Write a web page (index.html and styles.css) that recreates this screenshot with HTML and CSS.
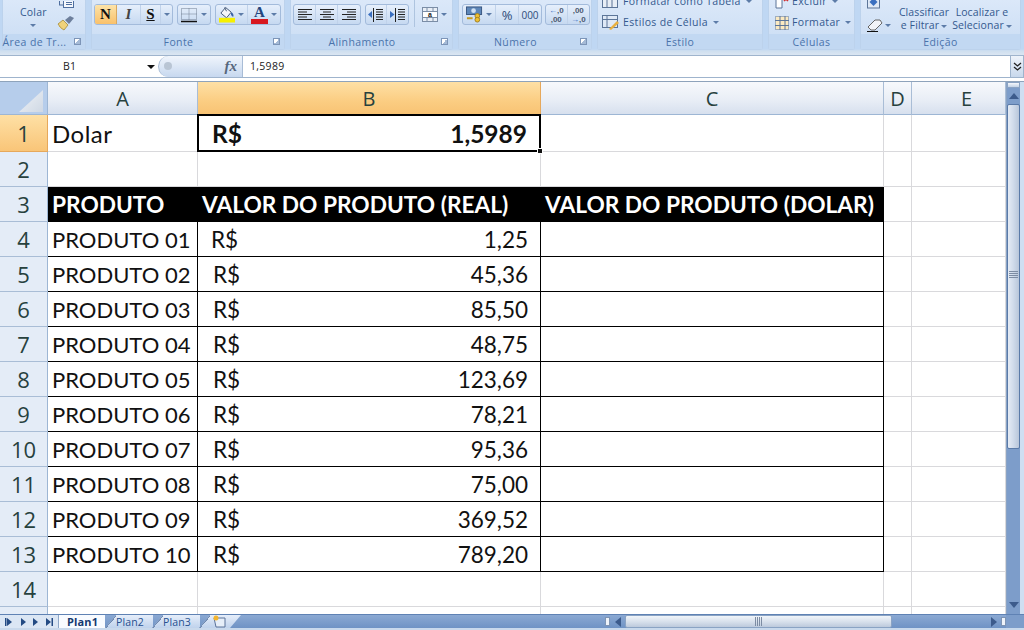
FILE: index.html
```html
<!DOCTYPE html>
<html lang="pt">
<head>
<meta charset="utf-8">
<title>Planilha</title>
<link rel="stylesheet" href="styles.css">
</head>
<body>
<div class="app">
  <div class="ribbon">
    <section class="group g-clip">
      <div class="body clip-body">
        <div class="paste"><span>Colar</span><i class="caret"></i></div>
        <div class="clip-tools">
          <svg width="16" height="7" viewBox="0 0 16 7"><rect x="1.500" y="-6" width="9" height="10" fill="#dfe8f4" stroke="#4f6f9f"/><rect x="5.500" y="-3" width="10" height="9.500" fill="#f5f8fc" stroke="#4f6f9f"/><path d="M8 1.500h6M8 3.500h6" stroke="#4f6f9f"/></svg>
          <svg width="18" height="15" viewBox="0 0 18 15"><path d="M1 8l5-4 5 5-4 5-3-2z" fill="#efd27a" stroke="#b09a50"/><path d="M8 4l5-4 4 2-5 6z" fill="#6d7f9c"/><path d="M2 10l3 3" stroke="#c9a94f"/></svg>
        </div>
      </div>
      <footer class="label launchable"><span>Área de Tr...</span><i class="launch"></i></footer>
    </section>

    <section class="group g-font">
      <div class="body tools">
        <div class="box">
          <b class="btn on glyph">N</b><b class="btn glyph it">I</b><b class="btn glyph un">S</b><span class="btn mini"><i class="caret"></i></span>
        </div>
        <div class="box">
          <span class="btn wide">
            <svg width="17" height="16" viewBox="0 0 17 16"><path d="M.500 1.500h15v11h-15zM8 1.500v11M.500 7h15" fill="none" stroke="#6f7c90" stroke-dasharray="1 1"/><path d="M0 14.500h16" stroke="#111" stroke-width="1.500"/></svg>
            <i class="caret"></i>
          </span>
        </div>
        <div class="box">
          <span class="btn wide">
            <svg width="17" height="18" viewBox="0 0 17 18"><path d="M7 1l6 5-5 6-6-5z" fill="#f4f6fa" stroke="#3f5475"/><path d="M6 1l2 4" stroke="#3f5475"/><path d="M13 6c2 1 3 3 2 5-2-1-3-3-2-5z" fill="#3a63a8"/><rect x="0" y="12" width="17" height="5" fill="#f6f000"/></svg>
            <i class="caret"></i>
          </span>
          <span class="btn wide">
            <span class="color-a">A</span>
            <i class="caret"></i>
          </span>
        </div>
      </div>
      <footer class="label launchable"><span>Fonte</span><i class="launch"></i></footer>
    </section>

    <section class="group g-align">
      <div class="body tools">
        <div class="box">
          <span class="btn sq"><svg width="16" height="12" viewBox="0 0 16 12"><path d="M1 .500h14M1 3h9M1 5.500h14M1 8h9M1 10.500h14" stroke="#222"/></svg></span>
          <span class="btn sq"><svg width="16" height="12" viewBox="0 0 16 12"><path d="M1 .500h14M4 3h8M1 5.500h14M4 8h8M1 10.500h14" stroke="#222"/></svg></span>
          <span class="btn sq"><svg width="16" height="12" viewBox="0 0 16 12"><path d="M1 .500h14M6 3h9M1 5.500h14M6 8h9M1 10.500h14" stroke="#222"/></svg></span>
        </div>
        <div class="box">
          <span class="btn sq s21"><svg width="16" height="14" viewBox="0 0 16 14"><path d="M8 1.500h7M8 4h7M8 6.500h7M8 9h7M8 11.500h7M5.500 0v14" stroke="#222"/><path d="M0 6.500l4-3.500v7z" fill="#3a6fc0"/></svg></span>
          <span class="btn sq s21"><svg width="16" height="14" viewBox="0 0 16 14"><path d="M8 1.500h7M8 4h7M8 6.500h7M8 9h7M8 11.500h7M5.500 0v14" stroke="#222"/><path d="M4.500 6.500L0 3v7z" fill="#3a6fc0"/></svg></span>
        </div>
        <i class="sep"></i>
        <span class="btn bare merge">
          <svg width="16" height="15" viewBox="0 0 16 15"><rect x=".5" y=".5" width="15" height="14" fill="#e8eef6" stroke="#7b8da6"/><path d="M0 4.500h16M0 10.500h16M5 0v4M11 0v4M5 11v4M11 11v4" stroke="#7b8da6"/><rect x="1" y="5" width="14" height="5" fill="#fff"/><text x="8" y="9.800" class="svg-a">a</text></svg>
          <i class="caret"></i>
        </span>
      </div>
      <footer class="label launchable"><span>Alinhamento</span><i class="launch"></i></footer>
    </section>

    <section class="group g-num">
      <div class="body tools">
        <div class="box">
          <span class="btn wide">
            <svg width="18" height="17" viewBox="0 0 18 17"><rect x=".5" y=".5" width="16" height="8" fill="#5d86b8" stroke="#38557f"/><circle cx="8" cy="4.500" r="2.500" fill="#cfe0f2"/><circle cx="12" cy="10" r="2.500" fill="#f0c030" stroke="#a08020"/><circle cx="12" cy="14" r="2.500" fill="#f0c030" stroke="#a08020"/><path d="M1 12.500h6" stroke="#c49a20" stroke-width="2"/></svg>
            <i class="caret"></i>
          </span>
          <span class="btn pct">%</span>
          <span class="btn pct zeros">000</span>
        </div>
        <div class="box">
          <span class="btn dec"><span class="dec-row"><i class="arr">←</i>,0</span><span class="dec-row">,00</span></span>
          <span class="btn dec"><span class="dec-row">,00</span><span class="dec-row"><i class="arr">→</i>,0</span></span>
        </div>
      </div>
      <footer class="label launchable"><span>Número</span><i class="launch"></i></footer>
    </section>

    <section class="group g-style">
      <div class="body list">
        <div class="cmd">
          <svg width="18" height="16" viewBox="0 0 18 16"><rect x=".5" y=".5" width="15" height="13" fill="#e8eef6" stroke="#5c7598"/><path d="M0 4.500h16M5 0v14M10 0v14" stroke="#5c7598"/></svg>
          <span>Formatar como Tabela</span><i class="caret"></i>
        </div>
        <div class="cmd">
          <svg width="18" height="16" viewBox="0 0 18 16"><rect x=".5" y=".5" width="15" height="12" fill="#dfe9f6" stroke="#5c7598"/><path d="M0 4.500h16M5 0v13" stroke="#5c7598"/><path d="M7 14l8-8 2 2-8 7z" fill="#e8b040"/></svg>
          <span>Estilos de Célula</span><i class="caret"></i>
        </div>
      </div>
      <footer class="label center"><span>Estilo</span></footer>
    </section>

    <section class="group g-cells">
      <div class="body list">
        <div class="cmd">
          <svg width="14" height="16" viewBox="0 0 14 16"><path d="M1 1h6v13H1z" fill="#fff" stroke="#5c7598"/><path d="M9 3l4 4M13 3L9 7" stroke="#d03030" stroke-width="1.500"/></svg>
          <span>Excluir</span><i class="caret"></i>
        </div>
        <div class="cmd">
          <svg width="14" height="16" viewBox="0 0 14 16"><rect x=".5" y="1.500" width="13" height="13" fill="#fbe9c0" stroke="#5c7598" stroke-dasharray="1 1"/><path d="M0 5.500h14M0 10.500h14M5 1v14M10 1v14" stroke="#5c7598"/></svg>
          <span>Formatar</span><i class="caret"></i>
        </div>
      </div>
      <footer class="label center"><span>Células</span></footer>
    </section>

    <section class="group g-edit">
      <div class="body edit-body">
        <div class="edit-icons">
          <svg width="14" height="14" viewBox="0 0 14 14"><rect x=".5" y="-2" width="12" height="12" fill="#dfe9f6" stroke="#5c7598"/><path d="M6.500 0l4 4-4 4-4-4z" fill="#3a6fc0"/></svg>
          <span class="eraser"><svg width="16" height="14" viewBox="0 0 16 14"><path d="M1 9l7-7h5l2 3-7 7H4z" fill="#f2f4f8" stroke="#666"/><path d="M0 13.500h11" stroke="#111"/></svg><i class="caret"></i></span>
        </div>
        <div class="stack s1"><span>Classificar</span><span>e Filtrar<i class="caret"></i></span></div>
        <div class="stack s2"><span>Localizar e</span><span>Selecionar<i class="caret"></i></span></div>
      </div>
      <footer class="label center"><span>Edição</span></footer>
    </section>
  </div>

  <div class="formula">
    <div class="namebox"><span>B1</span><i class="caret dark"></i></div>
    <div class="fxwrap"><i class="knob"></i><em>fx</em></div>
    <div class="fvalue">1,5989</div>
    <div class="fexpand">
      <svg width="9" height="9" viewBox="0 0 9 9"><path d="M1 1l3.500 3L8 1M1 5l3.500 3L8 5" fill="none" stroke="#222" stroke-width="1.300"/></svg>
    </div>
  </div>

  <div class="main">
    <div class="sheet">
      <div class="corner"><i></i></div>
      <div class="colh">A</div><div class="colh active">B</div><div class="colh">C</div><div class="colh">D</div><div class="colh last">E</div>

      <div class="rowh active r1">1</div><div class="c r1 lead">Dolar</div>
      <div class="c r1 sel acct bold"><span>R$</span><span>1,5989</span><i class="handle"></i></div>
      <div class="c r1"></div><div class="c r1"></div><div class="c r1"></div>

      <div class="rowh">2</div><div class="c"></div><div class="c"></div><div class="c"></div><div class="c"></div><div class="c"></div>

      <div class="rowh">3</div><div class="c th">PRODUTO</div><div class="c th">VALOR DO PRODUTO (REAL)</div><div class="c th">VALOR DO PRODUTO (DOLAR)</div><div class="c"></div><div class="c"></div>

      <div class="rowh">4</div><div class="c td">PRODUTO 01</div><div class="c td acct first"><span>R$</span><span>1,25</span></div><div class="c td"></div><div class="c"></div><div class="c"></div>
      <div class="rowh">5</div><div class="c td">PRODUTO 02</div><div class="c td acct"><span>R$</span><span>45,36</span></div><div class="c td"></div><div class="c"></div><div class="c"></div>
      <div class="rowh">6</div><div class="c td">PRODUTO 03</div><div class="c td acct"><span>R$</span><span>85,50</span></div><div class="c td"></div><div class="c"></div><div class="c"></div>
      <div class="rowh">7</div><div class="c td">PRODUTO 04</div><div class="c td acct"><span>R$</span><span>48,75</span></div><div class="c td"></div><div class="c"></div><div class="c"></div>
      <div class="rowh">8</div><div class="c td">PRODUTO 05</div><div class="c td acct"><span>R$</span><span>123,69</span></div><div class="c td"></div><div class="c"></div><div class="c"></div>
      <div class="rowh">9</div><div class="c td">PRODUTO 06</div><div class="c td acct"><span>R$</span><span>78,21</span></div><div class="c td"></div><div class="c"></div><div class="c"></div>
      <div class="rowh">10</div><div class="c td">PRODUTO 07</div><div class="c td acct"><span>R$</span><span>95,36</span></div><div class="c td"></div><div class="c"></div><div class="c"></div>
      <div class="rowh">11</div><div class="c td">PRODUTO 08</div><div class="c td acct"><span>R$</span><span>75,00</span></div><div class="c td"></div><div class="c"></div><div class="c"></div>
      <div class="rowh">12</div><div class="c td">PRODUTO 09</div><div class="c td acct"><span>R$</span><span>369,52</span></div><div class="c td"></div><div class="c"></div><div class="c"></div>
      <div class="rowh">13</div><div class="c td">PRODUTO 10</div><div class="c td acct"><span>R$</span><span>789,20</span></div><div class="c td"></div><div class="c"></div><div class="c"></div>

      <div class="rowh">14</div><div class="c"></div><div class="c"></div><div class="c"></div><div class="c"></div><div class="c"></div>
      <div class="rowh tail"></div><div class="c tail"></div><div class="c tail"></div><div class="c tail"></div><div class="c tail"></div><div class="c tail"></div>
    </div>
    <div class="vscroll">
      <i class="split-h"></i>
      <span class="arrow up"></span>
      <div class="vthumb"><svg width="9" height="7" viewBox="0 0 9 7"><path d="M0 .500h9M0 2.500h9M0 4.500h9M0 6.500h9" stroke="#7d8ca3"/></svg></div>
      <span class="arrow down"></span>
    </div>
  </div>

  <div class="tabbar">
    <div class="nav">
      <svg width="56" height="12" viewBox="0 0 56 12"><path d="M4 2v8h1.500V2zM11 6l-5-4v8zM25 6l-5-4v8zM32 2l5 4-5 4zM45 2l5 4-5 4zM50.500 2v8H52V2z" fill="#244b84"/></svg>
    </div>
    <div class="tab cur">Plan1</div>
    <div class="tab">Plan2</div>
    <div class="tab">Plan3</div>
    <div class="tab new">
      <svg width="15" height="13" viewBox="0 0 15 13"><path d="M2 3h11v9H4z" fill="#e6eef8" stroke="#5a7299"/><circle cx="4" cy="3" r="2.500" fill="#f3b52e"/></svg>
    </div>
    <div class="spacer"></div>
    <i class="split-v"></i>
    <span class="arrow left"></span>
    <div class="hthumb"><svg width="8" height="9" viewBox="0 0 8 9"><path d="M.500 0v9M2.500 0v9M4.500 0v9M6.500 0v9" stroke="#7d8ca3"/></svg></div>
    <div class="htrack"></div>
    <span class="arrow right"></span>
    <i class="split-v end"></i>
    <div class="tabcorner"></div>
  </div>
</div>
</body>
</html>
```

FILE: styles.css
```css
* { box-sizing: border-box; }
html, body { margin: 0; padding: 0; height: 100%; overflow: hidden; background: #fff; }
.app { width: 1024px; height: 630px; display: flex; flex-direction: column; font-family: "Open Sans", "Noto Sans", sans-serif; }
i, em { display: block; font-style: normal; }

/* Ribbon */
.ribbon { height: 55px; flex: none; display: flex; gap: 5px; padding: 0 3px 0 2px; background: linear-gradient(#bfd7f3 0, #bfd7f3 49px, #cfdfef 51px, #dbe6f2 55px); overflow: hidden; }
.group { flex: none; height: 50px; display: flex; flex-direction: column; background: #d5e4f7; border: 1px solid #bcd2ec; border-top: 0; border-radius: 0 0 3px 3px; }
.g-clip { width: 84px; }
.g-font { width: 194px; }
.g-align { width: 163px; }
.g-num { width: 134px; }
.g-style { width: 166px; }
.g-cells { width: 87px; }
.g-edit { width: 161px; }
.body { flex: 1; height: 34px; min-height: 0; overflow: hidden; background: linear-gradient(#dbe8f9, #cfe0f5); }
.label { height: 15px; flex: none; display: flex; align-items: center; justify-content: center; position: relative; padding-top: 1px; background: #c2d8f2; color: #4a73ab; font-size: 10.500px; line-height: 14px; letter-spacing: .4px; white-space: nowrap; }
.label.launchable { padding-right: 19px; }
.launch { position: absolute; right: 4px; top: 4px; width: 7px; height: 7px; border: 1px solid #7d95b8; background: linear-gradient(135deg, #fff 50%, #a5bad6 50%); }

.caret { display: inline-block; width: 0; height: 0; border: 3px solid transparent; border-top: 3px solid #5d7ca8; border-bottom: 0; vertical-align: middle; flex: none; }
.caret.dark { border-width: 4px 4px 0; border-top-color: #111; }

/* Clipboard */
.clip-body { display: flex; justify-content: space-between; align-items: flex-end; padding: 0 10px 3px 17px; }
.paste { display: flex; flex-direction: column; align-items: center; gap: 5px; color: #34598e; font-size: 10.500px; line-height: 14px; padding-bottom: 4px; letter-spacing: .2px; }
.clip-tools { display: flex; flex-direction: column; gap: 8px; align-items: center; }

/* Tool boxes */
.tools { display: flex; align-items: flex-start; padding: 4px 0 0 2px; gap: 4px; }
.box { height: 21px; display: flex; flex: none; border: 1px solid #a3bbdb; border-radius: 3px; background: linear-gradient(#e6effb, #c6d9f1); overflow: hidden; }
.btn { height: 19px; display: flex; align-items: center; justify-content: center; gap: 4px; border-right: 1px solid #c0d2ea; flex: none; }
.btn:last-child { border-right: 0; }
.glyph { width: 24px; font: bold 15px "Liberation Serif", serif; color: #111; }
.glyph.on { width: 22px; background: linear-gradient(#fde3a8, #f9c16b); border-right: 1px solid #d8a860; }
.glyph.it { font-style: italic; font-weight: bold; width: 24px; color: #444; }
.glyph.un { text-decoration: underline; width: 20px; }
.mini { width: 11px; }
.wide { padding: 0 3px; gap: 3px; }
.g-font .wide { width: 32px; }
.color-a { width: 17px; height: 18px; font: bold 15px/13px "Liberation Serif", serif; color: #24467e; text-align: center; border-bottom: 5px solid #d81820; }
.sq { width: 22px; }
.s21 { width: 21px; }
.sep { width: 1px; height: 27px; margin: -4px 0 0 1px; background: #aec4df; flex: none; }
.bare { background: none; }
.merge { margin: 1px 0 0 3px; gap: 3px; }
.svg-a { font: bold 7px "Liberation Sans", sans-serif; fill: #222; text-anchor: middle; }
.g-num .tools { padding-left: 3px; gap: 3px; }
.g-num .wide { width: 33px; }
.pct { width: 23px; font-size: 13px; color: #2e4b78; }
.zeros { width: 22px; font-size: 10px; }
.dec { width: 21.500px; flex-direction: column; gap: 0; font: bold 8px/9px "Liberation Sans", sans-serif; color: #4c5a70; }
.dec-row { display: flex; height: 9px; line-height: 9px; }
.arr { color: #3a6fc0; }

/* Style / cells lists */
.list { display: flex; flex-direction: column; justify-content: flex-end; gap: 4px; padding: 0 0 3px 4px; color: #34598e; font-size: 10.500px; letter-spacing: .35px; line-height: 17px; }
.g-cells .list { padding-left: 6px; }
.cmd { display: flex; align-items: center; gap: 3px; white-space: nowrap; flex: none; height: 17px; }
.cmd .caret { margin-left: 2px; }

/* Editing */
.edit-body { display: flex; align-items: flex-end; padding: 0 0 2px 6px; color: #34598e; font-size: 10.500px; line-height: 13px; letter-spacing: .1px; }
.edit-icons { width: 28px; display: flex; flex-direction: column; gap: 6px; flex: none; }
.eraser { display: flex; align-items: center; gap: 2px; }
.stack { display: flex; flex-direction: column; align-items: center; white-space: nowrap; }
.stack .caret { margin-left: 2px; }
.s1 { width: 58px; }
.s2 { width: 58px; }

/* Formula bar */
.formula { height: 23px; flex: none; display: flex; background: #fff; border-top: 1px solid #9fb4cd; border-bottom: 1px solid #9fb4cd; font-size: 10.500px; color: #222; line-height: 21px; }
.namebox { width: 158px; display: flex; align-items: center; justify-content: space-between; padding: 0 3px 0 63px; }
.namebox span { letter-spacing: .3px; }
.fxwrap { width: 85px; position: relative; background: linear-gradient(#f0f5fc, #c7d8ef); border: 1px solid #a8bcd6; border-width: 0 1px 0 1px; border-radius: 12px 0 0 12px; display: flex; align-items: center; justify-content: flex-end; padding-right: 5px; }
.knob { position: absolute; left: 5px; top: 6px; width: 8px; height: 8px; border-radius: 50%; background: #b9c5d4; }
.fxwrap em { font: italic bold 15px "Liberation Serif", serif; color: #57677c; }
.fvalue { flex: 1; padding-left: 7px; letter-spacing: .3px; }
.fexpand { width: 14px; display: flex; align-items: center; justify-content: center; background: linear-gradient(#eef3fa, #c8d8ec); border-left: 1px solid #9fb4cd; border-right: 1px solid #9fb4cd; }

/* Sheet */
.main { flex: 1; min-height: 0; display: flex; margin-top: 3px; border-top: 1px solid #8ea3bb; }
.sheet { width: 1006px; flex: none; display: grid; grid-template-columns: 48px 150px 343px 343px 28px 94px; grid-template-rows: 33px 37px repeat(13, 35px) 7px; font-family: Lato, "Open Sans", sans-serif; font-size: 22px; color: #111; }
.corner { background: #b6cdeb; border-right: 1px solid #9db6d4; border-bottom: 1px solid #9db6d4; padding: 8px 5px 3px 19px; }
.corner i { width: 24px; height: 22px; background: linear-gradient(135deg, #f0f3f7, #cfd8e4); clip-path: polygon(100% 0, 100% 100%, 0 100%); }
.colh { background: linear-gradient(#f7f9fc 0, #e9eef6 55%, #d7e0ee 100%); border-right: 1px solid #a9bdd6; border-bottom: 1px solid #9db6d4; display: flex; align-items: center; justify-content: center; font-family: "Open Sans", sans-serif; font-size: 20px; color: #27413e; padding-top: 1px; }
.colh.last { padding-left: 16px; }
.colh.active { background: linear-gradient(#fee0a5, #fbcd82 60%, #f8c374); border-right-color: #e6a85b; border-bottom-color: #e6a85b; }
.rowh { background: #e4ecf7; border-right: 1px solid #9db6d4; border-bottom: 1px solid #a9bdd6; display: flex; align-items: center; justify-content: center; font-family: "Open Sans", sans-serif; font-size: 22px; color: #27413e; }
.rowh.active { background: linear-gradient(#fee0a5, #f9c578); border-bottom-color: #e6a85b; border-right-color: #e6a85b; }
.c { background: #fff; border-right: 1px solid #d9d9dc; border-bottom: 1px solid #d9d9dc; display: flex; align-items: center; padding: 0 4px; white-space: nowrap; min-width: 0; }
.lead { font-size: 24px; letter-spacing: .5px; padding-top: 1px; }
.th { background: #000; color: #fff; font-weight: 700; font-size: 22.700px; border-color: #000; }
.td { border-color: #000; }
.acct { justify-content: space-between; padding: 0 12px 0 15px; }
.td.acct { font-size: 22.500px; }
.acct.first { padding-left: 13px; }
.bold { font-weight: 700; font-size: 24.500px; padding-top: 1px; }
.sel { position: relative; padding-left: 14px; padding-right: 13px; }
.sel::after { content: ""; position: absolute; left: -1px; top: -1px; right: -1px; bottom: -1px; border: 2px solid #000; }
.handle { position: absolute; z-index: 1; right: -3px; bottom: -3px; width: 6px; height: 6px; background: #111; border: 1px solid #fff; }
.tail { border-bottom: 0; }
.rowh.tail { background: #e4ecf7; }

/* Vertical scrollbar */
.vscroll { flex: 1; display: flex; flex-direction: column; align-items: stretch; background: #7d9dca; border-left: 1px solid #8aa3c4; border-right: 4px solid #cfdff2; position: relative; }
.split-h { height: 6px; background: linear-gradient(#f5f8fc, #c3d3e7); border: 1px solid #8aa3c4; }
.arrow { display: block; width: 0; height: 0; border: 5px solid transparent; flex: none; }
.arrow.up { border-top: 0; border-bottom: 6px solid #3c5b8c; margin: 5px auto 5px; }
.arrow.down { border-bottom: 0; border-top: 6px solid #3c5b8c; margin: auto auto 6px; }
.vthumb { height: 345px; flex: none; display: flex; align-items: flex-end; justify-content: center; padding-bottom: 170px; background: linear-gradient(90deg, #e4ebf5, #cfdaea 50%, #b8c6da); border: 1px solid #5a7aa8; border-radius: 2px; }

/* Tabs */
.tabbar { height: 16px; flex: none; display: flex; align-items: stretch; background: linear-gradient(#8ba9d3, #6f93c5); border-top: 1px solid #5f82b4; border-bottom: 2px solid #c9d9ec; font-size: 10.500px; color: #27508f; }
.nav { width: 59px; flex: none; display: flex; align-items: center; padding-left: 1px; background: #dbe6f4; border-right: 1px solid #8ea7c8; }
.tab { width: 48px; flex: none; margin-right: -1px; padding-left: 11px; display: flex; align-items: center; background: linear-gradient(to bottom right, transparent 44%, #6d88b0 44%, #6d88b0 56%, transparent 56%) left top / 11px 13px no-repeat, linear-gradient(#e6eefa, #bfd2ec); clip-path: polygon(0 100%, 11px 0, 100% 0, 100% 100%); letter-spacing: .15px; }
.tab.cur { width: 46px; margin-right: 0; padding-left: 8px; background: #f8fbff; clip-path: none; font-weight: 700; color: #15396f; font-size: 11px; }
.tab.new { width: 42px; padding-left: 13px; clip-path: polygon(0 100%, 11px 0, 100% 0, calc(100% - 11px) 100%); }
.spacer { flex: 1; }
.split-v { width: 5px; margin: 2px 0; background: #eef3fa; border: 1px solid #7d94b4; flex: none; }
.arrow.left { border-left: 0; border-right: 6px solid #3c5b8c; margin: 2px 4px 0 5px; }
.arrow.right { border-right: 0; border-left: 6px solid #3c5b8c; margin: 2px 4px 0 4px; }
.hthumb { width: 267px; flex: none; display: flex; align-items: center; justify-content: center; background: linear-gradient(#f1f5fa, #d6dfeb 55%, #bcc9dc); border: 1px solid #8aa3c4; border-radius: 2px; }
.htrack { width: 95px; flex: none; }
.split-v.end { margin-right: 0; }
.tabcorner { width: 18px; flex: none; background: #7d9dca; }
```
